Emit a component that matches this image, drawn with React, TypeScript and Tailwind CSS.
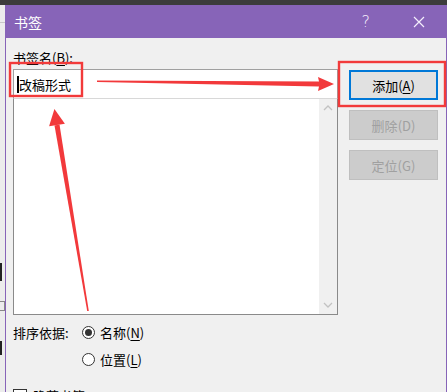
import React from "react";

const font = "font-['Noto_Sans_CJK_SC','Microsoft_YaHei',sans-serif]";

function Btn({ label, k, primary, disabled }: { label: string; k: string; primary?: boolean; disabled?: boolean }) {
  return (
    <div
      className={
        "h-[30px] w-[89px] shrink-0 flex items-center justify-center text-[13px] leading-none " +
        (primary
          ? "bg-[#e1e1e1] border-2 border-[#0078d7] text-black"
          : disabled
          ? "bg-[#cccccc] border border-[#bfbfbf] text-[#a0a0a0]"
          : "bg-[#e1e1e1] border border-[#adadad] text-black")
      }
    >
      <span>
        {label}(<span className={primary ? "underline underline-offset-2" : ""}>{k}</span>)
      </span>
    </div>
  );
}

function Radio({ checked, label, k }: { checked?: boolean; label: string; k: string }) {
  return (
    <div className="flex items-center h-[20px] gap-[5px] shrink-0">
      <div className="w-[13px] h-[13px] rounded-full border border-[#333] bg-white flex items-center justify-center">
        {checked && <div className="w-[7px] h-[7px] rounded-full bg-[#333]" />}
      </div>
      <span className="text-[13px] leading-none text-black">
        {label}(<span className="underline underline-offset-2">{k}</span>)
      </span>
    </div>
  );
}

export default function App() {
  return (
    <div className={"relative w-[447px] h-[392px] overflow-hidden bg-[#e8e8e8] " + font}>
      <div className="h-[5px] bg-[#3c3c3c]" />
      <div className="flex h-[387px] overflow-hidden">
        <div className="w-[5px] shrink-0 flex flex-col bg-[#ececec]">
          <div className="h-[17px] shrink-0" />
          <div className="h-px shrink-0 bg-[#c8c8c8]" />
          <div className="h-[240px] shrink-0" />
          <div className="w-[2px] h-[18px] shrink-0 bg-[#222]" />
          <div className="h-[20px] shrink-0" />
          <div className="h-[10px] shrink-0 border border-[#888] border-l-0" />
          <div className="h-[30px] shrink-0" />
          <div className="w-[2px] h-[14px] shrink-0 bg-[#222]" />
        </div>
        <div className="flex-1 flex flex-col border-l border-r border-[#8764b8] bg-[#f0f0f0] overflow-hidden">
          <div className="h-[33px] shrink-0 bg-[#8764b8] flex items-center pl-[8px] text-white">
            <span className="text-[14px] leading-none">书签</span>
            <div className="flex-1" />
            <span className="text-[16px] leading-none font-['DejaVu_Sans',sans-serif] font-light mr-[43px] text-[#f4eefc]">?</span>
            <svg width="12" height="12" viewBox="0 0 12 12" className="mr-[21px]">
              <path d="M1 1L11 11M11 1L1 11" stroke="#f4eefc" strokeWidth="1.2" />
            </svg>
          </div>
          <div className="flex flex-col shrink-0 pl-[7px] pr-[7px]">
            <div className="mt-[11px] h-[17px] shrink-0 text-[13px] leading-[17px] text-black">
              书签名(<span className="underline underline-offset-2">B</span>):
            </div>
            <div className="flex gap-[11px] mt-[3px] shrink-0">
              <div className="w-[325px] flex flex-col">
                <div className="h-[29px] shrink-0 bg-white border border-[#a0a0a0] border-b-0 flex items-center pl-[3px]">
                  <div className="w-[2px] h-[17px] bg-black" />
                  <span className="text-[13px] leading-none text-black">改稿形式</span>
                </div>
                <div className="h-[217px] shrink-0 bg-white border border-[#8a8a8a] border-t-[#d8d8d8] flex">
                  <div className="flex-1" />
                  <div className="w-[18px] bg-[#f0f0f0] flex flex-col items-center justify-between py-[6px]">
                    <svg width="10" height="6" viewBox="0 0 10 6">
                      <path d="M1 5L5 1L9 5" stroke="#c2c2c2" strokeWidth="1.3" fill="none" />
                    </svg>
                    <svg width="10" height="6" viewBox="0 0 10 6">
                      <path d="M1 1L5 5L9 1" stroke="#c2c2c2" strokeWidth="1.3" fill="none" />
                    </svg>
                  </div>
                </div>
              </div>
              <div className="flex flex-col gap-[10px] pt-[1px]">
                <Btn label="添加" k="A" primary />
                <Btn label="删除" k="D" disabled />
                <Btn label="定位" k="G" disabled />
              </div>
            </div>
            <div className="flex mt-[7px] shrink-0">
              <div className="w-[69px] h-[20px] flex items-center text-[13px] leading-none text-black">排序依据:</div>
              <div className="flex flex-col gap-[7px]">
                <Radio checked label="名称" k="N" />
                <Radio label="位置" k="L" />
              </div>
            </div>
            <div className="flex items-start gap-[6px] mt-[20px] shrink-0">
              <div className="w-[14px] h-[14px] border border-[#333] bg-white" />
              <span className="text-[13px] leading-[14px] text-black">隐藏书签</span>
            </div>
          </div>
        </div>
      </div>
      <svg className="absolute inset-0 pointer-events-none" width="447" height="392" viewBox="0 0 447 392">
        <rect x="10" y="63" width="72" height="33" fill="none" stroke="#f23a3a" strokeWidth="2.4" />
        <rect x="339" y="62" width="106" height="44" fill="none" stroke="#f23a3a" strokeWidth="2.4" />
        <polygon
          points="97,80.4 319,81.6 318,77 334,84 318,91 319,86.4 97,81.9"
          fill="#f2393b"
        />
        <polygon
          points="54.5,125.4 59.5,124.6 88.8,310.9 87.2,311.1"
          fill="#f2393b"
        />
        <polygon points="54.4,109 64.9,123.7 49.1,126.3" fill="#f2393b" />
      </svg>
    </div>
  );
}
